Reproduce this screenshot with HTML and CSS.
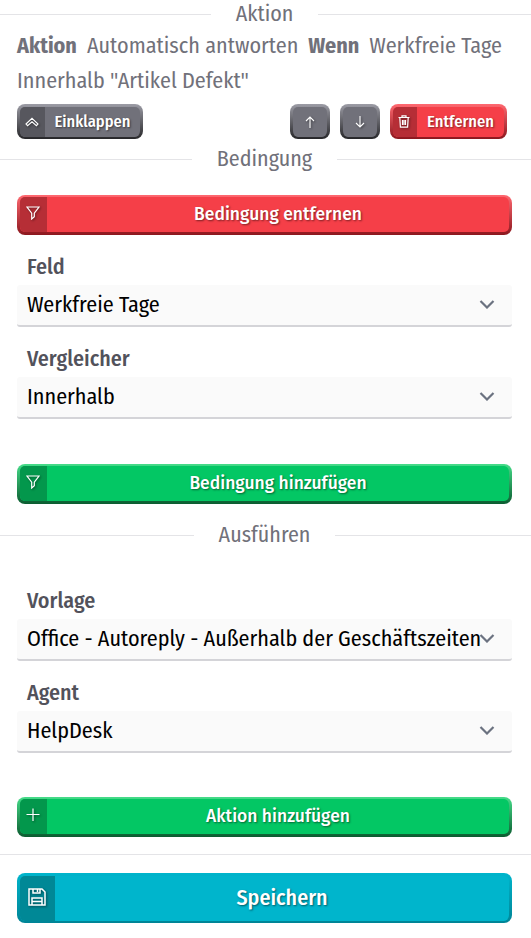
FILE: index.html
```
<!DOCTYPE html>
<html lang="de">
<head>
<meta charset="utf-8">
<title>Aktion</title>
<link rel="stylesheet" href="styles.css">
</head>
<body>
<svg class="defs" aria-hidden="true">
  <symbol id="filter" viewBox="0 0 14 14"><path d="M1 1h12L8.3 7.2v3.6L5.7 13V7.2Z"/></symbol>
  <symbol id="chevron" viewBox="0 0 16 9"><path d="m1.500 1 6.500 6.500L14.500 1"/></symbol>
</svg>
<main>
  <h2 class="divider"><span>Aktion</span></h2>
  <p class="summary"><b>Aktion</b><span class="value">Automatisch antworten</span><b>Wenn</b><span class="value">Werkfreie Tage</span><br><span class="detail">Innerhalb "Artikel Defekt"</span></p>
  <div class="toolbar">
    <button class="btn small gray collapse"><span class="icon"><svg width="14" height="10" viewBox="0 0 14 10"><path d="M1 7 7 1.300 13 7 11.400 8.700 7 4.800 2.600 8.700Z"/></svg></span><span class="text">Einklappen</span></button>
    <button class="btn small gray arrow" aria-label="Nach oben"><svg width="10" height="12" viewBox="0 0 10 12"><path d="M5 12V1M1 5l4-4 4 4"/></svg></button>
    <button class="btn small gray arrow" aria-label="Nach unten"><svg width="10" height="12" viewBox="0 0 10 12"><path d="M5 0v11M1 7l4 4 4-4"/></svg></button>
    <button class="btn small red remove"><span class="icon"><svg width="12" height="13" viewBox="0 0 12 13"><path d="M.5 2.5h11M4 2.3V.8h4v1.5M1.8 2.8l.6 9.4h7.2l.6-9.4M4.5 5v5M6 5v5M7.5 5v5"/></svg></span><span class="text">Entfernen</span></button>
  </div>
  <h2 class="divider second"><span>Bedingung</span></h2>
  <section class="condition">
    <button class="btn red"><span class="icon"><svg width="14" height="14"><use href="#filter"/></svg></span><span class="text">Bedingung entfernen</span></button>
    <div class="fields">
      <div class="field"><label>Feld</label><div class="select">Werkfreie Tage<svg class="caret"><use href="#chevron"/></svg></div></div>
      <div class="field"><label>Vergleicher</label><div class="select">Innerhalb<svg class="caret"><use href="#chevron"/></svg></div></div>
    </div>
    <button class="btn green"><span class="icon"><svg width="14" height="14"><use href="#filter"/></svg></span><span class="text">Bedingung hinzufügen</span></button>
  </section>
  <h2 class="divider third"><span>Ausführen</span></h2>
  <section class="execute">
    <div class="fields">
      <div class="field"><label>Vorlage</label><div class="select">Office - Autoreply - Außerhalb der Geschäftszeiten<svg class="caret"><use href="#chevron"/></svg></div></div>
      <div class="field"><label>Agent</label><div class="select">HelpDesk<svg class="caret"><use href="#chevron"/></svg></div></div>
    </div>
    <button class="btn green"><span class="icon"><svg width="14" height="14" viewBox="0 0 14 14"><path d="M7 .5v12.500M.5 6.500h13"/></svg></span><span class="text">Aktion hinzufügen</span></button>
  </section>
  <footer>
    <button class="btn teal"><span class="icon"><svg width="18" height="18" viewBox="0 0 18 18"><path class="thick" d="M1 1h13l3 3v13H1ZM5 1v4h7V1M9.500 1v3M4 17v-7h10v7M4 13.500h10"/></svg></span><span class="text">Speichern</span></button>
  </footer>
</main>
</body>
</html>
```

FILE: styles.css
```
* { box-sizing: border-box; }
body {
  margin: 0;
  background: #fff;
  color: #71717a;
  font: 400 22px/35px "Fira Sans Condensed", "Noto Sans", sans-serif;
  overflow: hidden;
}
.defs { display: none; }

.divider {
  display: flex;
  align-items: center;
  gap: 25px;
  height: 29px;
  margin: 0 2px 0 0;
  font-size: 22px;
  font-weight: 400;
  line-height: 27px;
}
.divider span { height: 29px; }
.divider::before,
.divider::after {
  content: "";
  flex: 1;
  height: 1px;
  background: #e4e4e7;
}
.divider::after { margin-right: -2px; flex-basis: 2px; }
.divider.second { margin-top: 6px; }
.divider.third { margin-top: 17px; }

.summary { height: 70px; margin: -1px 0 0; padding-left: 17px; white-space: nowrap; }
.summary .value { margin: 0 10px; }
.value, .detail { font-size: 22.150px; }

.toolbar { display: flex; gap: 10px; margin: 6px 24px 0 17px; }

.btn {
  display: flex;
  width: 100%;
  height: 40px;
  padding: 0;
  border: solid transparent;
  border-width: 2px 3px 3px;
  border-radius: 8px;
  color: #fff;
  font: 500 17.5px/35px "Fira Sans", "Noto Sans", sans-serif;
  text-shadow: 1px 1px 2px rgb(0 0 0 / 50%);
  background:
    linear-gradient(var(--face), var(--face)) padding-box,
    linear-gradient(var(--light), var(--dark)) border-box;
}
.gray { --face: #71717a; --light: #9c9ca5; --dark: #27272a; --shade: #57575e; }
.red { --face: #f53f48; --light: #ff6870; --dark: #8c171e; --shade: #b62e36; }
.green { --face: #03c764; --light: #45dc89; --dark: #0b5c30; --shade: #03974c; }
.teal { --face: #00b5cc; --light: #00b5cc; --dark: #008496; --shade: #008896; }

.btn .icon {
  display: flex;
  align-items: center;
  justify-content: center;
  flex: none;
  width: 27px;
  height: 100%;
  padding-right: 1px;
  border-radius: 5px 0 0 5px;
  background: var(--shade);
}
.btn .text { flex: 1; text-align: center; }
.btn svg {
  fill: none;
  stroke: #fff;
  stroke-width: 1.2;
  filter: drop-shadow(1px 1px 1px rgb(0 0 0 / 45%));
}
.btn > .icon svg { margin-top: -3px; }

.btn.small {
  height: 35px;
  border-width: 3px 3px 2px;
  font-family: "Fira Sans Condensed", "Noto Sans", sans-serif;
  font-size: 16.500px;
  line-height: 30px;
}
.small .icon { width: 25px; }
.small > .icon svg { margin-top: -1px; }
.collapse { width: 126px; margin-right: auto; }
.collapse svg { stroke-width: 1.100; }
.remove { width: 117px; }
.remove .icon { width: 24px; padding-right: 2px; }
.arrow { width: 40px; align-items: center; justify-content: center; }
.arrow svg { stroke-width: 1.100; }

.condition { padding: 21px 19px 0 17px; }
.execute { padding: 33px 19px 0 17px; }
.fields { display: grid; gap: 6px; }
.condition .fields { margin: 14px 0 37px; }
.execute .fields { margin-bottom: 36px; }
.field { height: 86px; }
.field label {
  display: block;
  height: 36px;
  padding-left: 10px;
  color: #52525b;
  font-weight: 500;
}
.select {
  position: relative;
  height: 42px;
  padding-left: 10px;
  border-bottom: 2px solid #d4d4d8;
  border-radius: 3px;
  background: #fafafa;
  color: #000;
  font-size: 22.150px;
  line-height: 40px;
  white-space: nowrap;
}
.caret {
  position: absolute;
  right: 17px;
  top: 15px;
  width: 16px;
  height: 9px;
  fill: none;
  stroke: #6b7280;
  stroke-width: 2.200;
}

footer { margin-top: 17px; padding: 18px 19px 0 17px; border-top: 1px solid #e4e4e7; }
.btn.teal {
  height: 50px;
  border-width: 3px 3px 2px;
  font-family: "Fira Sans Condensed", "Noto Sans", sans-serif;
  font-size: 22px;
  line-height: 43px;
}
.teal .icon { width: 35px; }
.teal .thick { stroke-width: 1.500; }
```
